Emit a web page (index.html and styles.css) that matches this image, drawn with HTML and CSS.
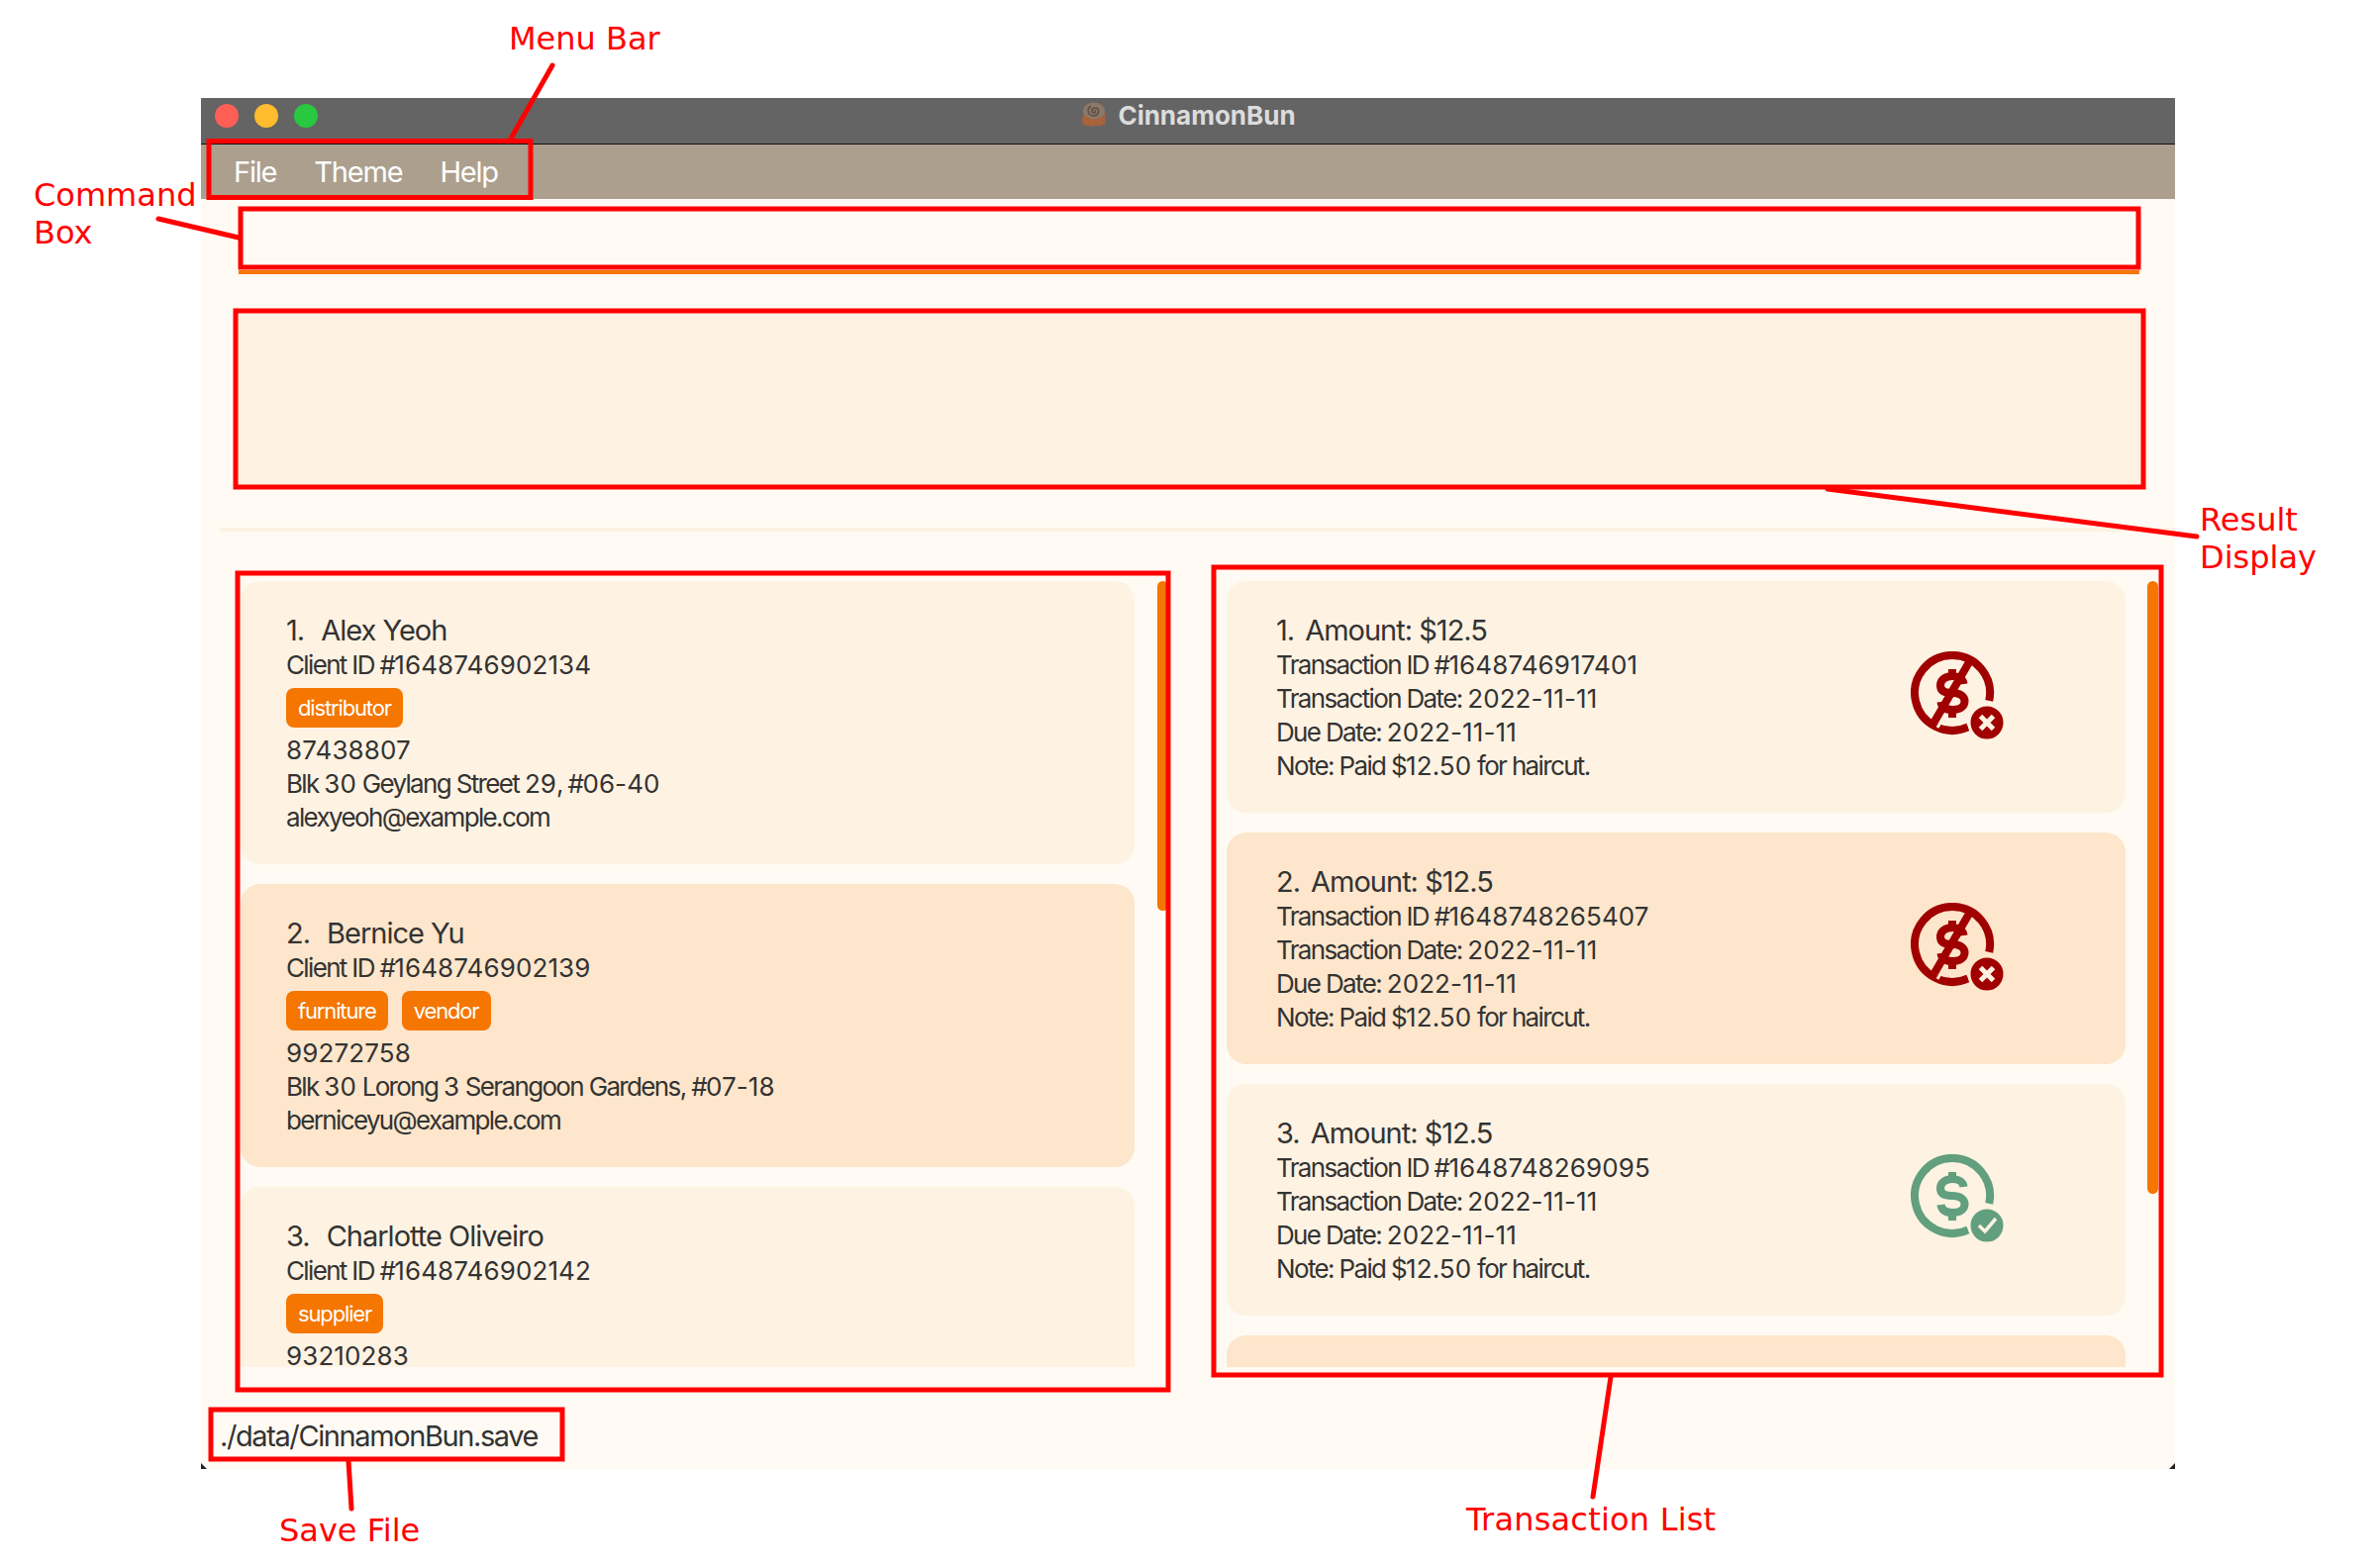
FILE: index.html
```html
<!DOCTYPE html>
<html lang="en">
<head>
    <meta charset="UTF-8">
    <meta name="viewport" content="width=device-width, initial-scale=1.0">
    <title>CinnamonBun</title>
    <link rel="stylesheet" href="styles.css">
</head>
<body>
    <svg width="0" height="0" class="defs">
        <defs>
            <g id="coin">
                <path class="ring" d="M79.2 49.9A38 38 0 1 0 58 76.4"/>
                <path class="dollar" d="M53.5 33C53 28 48 25 42 25C35 25 30 29 30 34.5C30 40 35 42 42 42C49 42 54.5 45 54.5 50.5C54.5 56 49 59 42 59C35 59 31 56 30.5 51M42 18V25M42 59V67"/>
            </g>
        </defs>
    </svg>

    <div class="window">
        <div class="titlebar">
            <div class="lights">
                <span class="light red"></span>
                <span class="light yellow"></span>
                <span class="light green"></span>
            </div>
            <div class="title">
                <svg class="bun" viewBox="0 0 28 26" width="28" height="26">
                    <path d="M4 6C6 1 22 1 24 6L26 20C24 25 21 22 19 25C16 22 12 26 9 24C6 25 3 23 2 19Z" fill="#a8623c"/>
                    <ellipse cx="14" cy="9" rx="11" ry="8.5" fill="#8a7868"/>
                    <path d="M14 9C16 8 16 11 14 11C11 11 11 6 15 6C20 6 20 13 14 14C8 14 6 7 11 4" fill="none" stroke="#5f4f44" stroke-width="1.6"/>
                </svg>
                <span>CinnamonBun</span>
            </div>
        </div>

        <nav class="menubar">
            <span>File</span>
            <span>Theme</span>
            <span>Help</span>
        </nav>

        <div class="command-box"></div>
        <div class="result-display"></div>
        <div class="divider"></div>

        <div class="lists">
            <div class="list client-list">
                <div class="card odd">
                    <div class="name"><span class="index">1.</span>Alex Yeoh</div>
                    <div class="line">Client ID #<span class="num">1648746902134</span></div>
                    <div class="tags"><span class="tag">distributor</span></div>
                    <div class="line"><span class="num">87438807</span></div>
                    <div class="line">Blk <span class="num">30</span> Geylang Street <span class="num">29</span>, #<span class="num">06-40</span></div>
                    <div class="line">alexyeoh@example.com</div>
                </div>
                <div class="card even">
                    <div class="name"><span class="index">2.</span>Bernice Yu</div>
                    <div class="line">Client ID #<span class="num">1648746902139</span></div>
                    <div class="tags"><span class="tag">furniture</span><span class="tag">vendor</span></div>
                    <div class="line"><span class="num">99272758</span></div>
                    <div class="line">Blk <span class="num">30</span> Lorong <span class="num">3</span> Serangoon Gardens, #<span class="num">07-18</span></div>
                    <div class="line">berniceyu@example.com</div>
                </div>
                <div class="card odd">
                    <div class="name"><span class="index">3.</span>Charlotte Oliveiro</div>
                    <div class="line">Client ID #<span class="num">1648746902142</span></div>
                    <div class="tags"><span class="tag">supplier</span></div>
                    <div class="line"><span class="num">93210283</span></div>
                </div>
                <div class="thumb"></div>
            </div>

            <div class="list transaction-list">
                <div class="card odd transaction">
                    <div class="details">
                        <div class="name"><span class="index tight">1.</span>Amount: $12.5</div>
                        <div class="line">Transaction ID #<span class="num">1648746917401</span></div>
                        <div class="line">Transaction Date: <span class="num">2022-11-11</span></div>
                        <div class="line">Due Date: <span class="num">2022-11-11</span></div>
                        <div class="line">Note: Paid $<span class="num">12.50</span> for haircut.</div>
                    </div>
                    <svg class="status unpaid" viewBox="0 0 96 92" width="96" height="92">
                        <use href="#coin"/>
                        <path class="halo" d="M33 67L27 77"/>
                        <path class="slash" d="M59 11L24 71"/>
                        <circle class="badge" cx="77" cy="72" r="18"/>
                        <path class="cross" d="M70.5 65.5L83.5 78.5M83.5 65.5L70.5 78.5"/>
                    </svg>
                </div>
                <div class="card even transaction">
                    <div class="details">
                        <div class="name"><span class="index tight">2.</span>Amount: $12.5</div>
                        <div class="line">Transaction ID #<span class="num">1648748265407</span></div>
                        <div class="line">Transaction Date: <span class="num">2022-11-11</span></div>
                        <div class="line">Due Date: <span class="num">2022-11-11</span></div>
                        <div class="line">Note: Paid $<span class="num">12.50</span> for haircut.</div>
                    </div>
                    <svg class="status unpaid" viewBox="0 0 96 92" width="96" height="92">
                        <use href="#coin"/>
                        <path class="halo" d="M33 67L27 77"/>
                        <path class="slash" d="M59 11L24 71"/>
                        <circle class="badge" cx="77" cy="72" r="18"/>
                        <path class="cross" d="M70.5 65.5L83.5 78.5M83.5 65.5L70.5 78.5"/>
                    </svg>
                </div>
                <div class="card odd transaction">
                    <div class="details">
                        <div class="name"><span class="index tight">3.</span>Amount: $12.5</div>
                        <div class="line">Transaction ID #<span class="num">1648748269095</span></div>
                        <div class="line">Transaction Date: <span class="num">2022-11-11</span></div>
                        <div class="line">Due Date: <span class="num">2022-11-11</span></div>
                        <div class="line">Note: Paid $<span class="num">12.50</span> for haircut.</div>
                    </div>
                    <svg class="status paid" viewBox="0 0 96 92" width="96" height="92">
                        <use href="#coin"/>
                        <circle class="badge" cx="77" cy="72" r="18"/>
                        <path class="check" d="M69 72L75 78L86 65"/>
                    </svg>
                </div>
                <div class="card even transaction"></div>
                <div class="thumb"></div>
            </div>
        </div>

        <div class="save-file">./data/CinnamonBun.save</div>
        <span class="corner left"></span>
        <span class="corner right"></span>
    </div>

    <!-- annotations over the screenshot -->
    <svg class="marks" viewBox="0 0 2400 1584" width="2400" height="1584">
        <rect x="211" y="142.5" width="325" height="57"/>
        <rect x="243" y="211" width="1917" height="59"/>
        <rect x="238" y="314" width="1927" height="178"/>
        <rect x="240" y="579" width="940" height="825"/>
        <rect x="1226" y="573" width="957" height="816"/>
        <rect x="213" y="1424" width="355" height="50"/>
        <path d="M558 66L516 140"/>
        <path d="M160 221L241 240"/>
        <path d="M1846 494L2219 542"/>
        <path d="M352 1476L355 1524"/>
        <path d="M1627 1391L1609 1512"/>
    </svg>
    <span class="note note-menu">Menu Bar</span>
    <span class="note note-command">Command<br>Box</span>
    <span class="note note-result">Result<br>Display</span>
    <span class="note note-save">Save File</span>
    <span class="note note-transaction">Transaction List</span>
</body>
</html>
```

FILE: styles.css
```css
/* page */
body {
    margin: 0;
    height: 1584px;
    padding: 99px 203px 0;
    box-sizing: border-box;
    position: relative;
    overflow: hidden;
    background: #fff;
    font-family: "Inter", "Liberation Sans", sans-serif;
    color: #333;
}
.defs {
    position: absolute;
}

/* app window */
.window {
    position: relative;
    width: 1994px;
    height: 1385px;
    background: #fffaf3;
}
.titlebar {
    display: grid;
    grid-template-columns: 1fr auto 1fr;
    align-items: center;
    height: 36px;
    padding-bottom: 10px;
    background: #646464;
    border-bottom: 1px solid #111;
}
.lights {
    display: flex;
    gap: 16px;
    padding-left: 14px;
}
.light {
    width: 24px;
    height: 24px;
    border-radius: 50%;
}
.red { background: #ff5f57; }
.yellow { background: #febc2e; }
.green { background: #28c840; }
.title {
    display: flex;
    align-items: center;
    gap: 10px;
    margin-bottom: 2px;
    font-size: 26px;
    font-weight: 700;
    color: #dcdcdc;
}
.menubar {
    display: flex;
    gap: 38px;
    align-items: center;
    height: 55px;
    padding-left: 33px;
    background: #ac9f8e;
    color: #fff;
    font-size: 29px;
    letter-spacing: -1.2px;
}
.command-box {
    height: 60px;
    margin: 12px 36px 0 38px;
    border-bottom: 4px solid #f57600;
}
.result-display {
    height: 178px;
    margin: 37px 32px 0 35px;
    background: #fdf1e1;
}
.divider {
    height: 4px;
    margin: 41px 0 0 19px;
    background: #fdf1e1;
}

/* the two lists */
.lists {
    display: flex;
    gap: 59px;
    height: 794px;
    margin: 50px 17px 0 40px;
}
.list {
    position: relative;
    overflow: hidden;
    display: flex;
    flex-direction: column;
    gap: 20px;
}
.client-list {
    width: 937px;
    padding-right: 34px;
    box-sizing: border-box;
}
.transaction-list {
    width: 941px;
    padding-right: 33px;
    box-sizing: border-box;
}
.card {
    flex: none;
    box-sizing: border-box;
    padding: 32px 50px 30px 46px;
    border-radius: 20px;
}
.odd {
    background: #fef2e2;
    --card-bg: #fef2e2;
}
.even {
    background: #fde6cb;
    --card-bg: #fde6cb;
}
.name {
    height: 36px;
    line-height: 36px;
    font-size: 29px;
    letter-spacing: -1px;
}
.index {
    margin-right: 17px;
}
.index.tight {
    margin-right: 11px;
}
.line {
    height: 34px;
    line-height: 34px;
    font-size: 26px;
    letter-spacing: -1.65px;
}
.num {
    letter-spacing: 0.1px;
}
.tags {
    display: flex;
    gap: 14px;
    margin: 6px 0;
}
.tag {
    height: 40px;
    line-height: 40px;
    padding: 0 12px;
    border-radius: 8px;
    background: #f57600;
    color: #fff;
    font-size: 22px;
    letter-spacing: -1.15px;
}
.thumb {
    position: absolute;
    top: 0;
    right: 0;
    width: 11px;
    height: 333px;
    border-radius: 6px;
    background: #f57600;
}
.transaction-list .thumb {
    height: 619px;
}

/* transaction rows */
.transaction {
    display: flex;
    justify-content: space-between;
    align-items: center;
    height: 234px;
    padding: 0 121px 0 50px;
}
.details {
    padding-top: 2px;
}
.status {
    flex: none;
}
.status path {
    fill: none;
}
.status use {
    fill: none;
}
.ring {
    stroke-width: 8;
}
.dollar {
    stroke-width: 8;
}
.unpaid {
    color: #a00000;
}
.paid {
    color: #619f7e;
}
.unpaid use,
.paid use {
    stroke: currentColor;
}
.badge {
    fill: currentColor;
    stroke: var(--card-bg);
    stroke-width: 3;
}
.halo {
    stroke: var(--card-bg);
    stroke-width: 3;
}
.slash {
    stroke: currentColor;
    stroke-width: 8;
}
.cross {
    stroke: #fdf1e1;
    stroke-width: 5;
}
.check {
    stroke: #fdf1e1;
    stroke-width: 3.5;
}

/* footer */
.save-file {
    height: 103px;
    padding: 52px 0 0 19px;
    box-sizing: border-box;
    line-height: 36px;
    font-size: 29px;
    letter-spacing: -1.4px;
}
.corner {
    position: absolute;
    bottom: 0;
    width: 6px;
    height: 6px;
    background: #222;
}
.corner.left {
    left: 0;
    clip-path: polygon(0 0, 100% 100%, 0 100%);
}
.corner.right {
    right: 0;
    clip-path: polygon(100% 0, 100% 100%, 0 100%);
}

/* red annotations */
.marks {
    position: absolute;
    top: 0;
    left: 0;
}
.marks rect {
    fill: none;
    stroke: #f00;
    stroke-width: 5;
}
.marks path {
    fill: none;
    stroke: #f00;
    stroke-width: 5;
    stroke-linecap: round;
}
.note {
    position: absolute;
    font-family: "DejaVu Sans", sans-serif;
    font-size: 32px;
    line-height: 38px;
    color: #f00;
}
.note-menu { left: 514px; top: 20px; }
.note-command { left: 34px; top: 178px; }
.note-result { left: 2222px; top: 506px; }
.note-save { left: 282px; top: 1527px; }
.note-transaction { left: 1481px; top: 1516px; letter-spacing: 0.2px; }
```
